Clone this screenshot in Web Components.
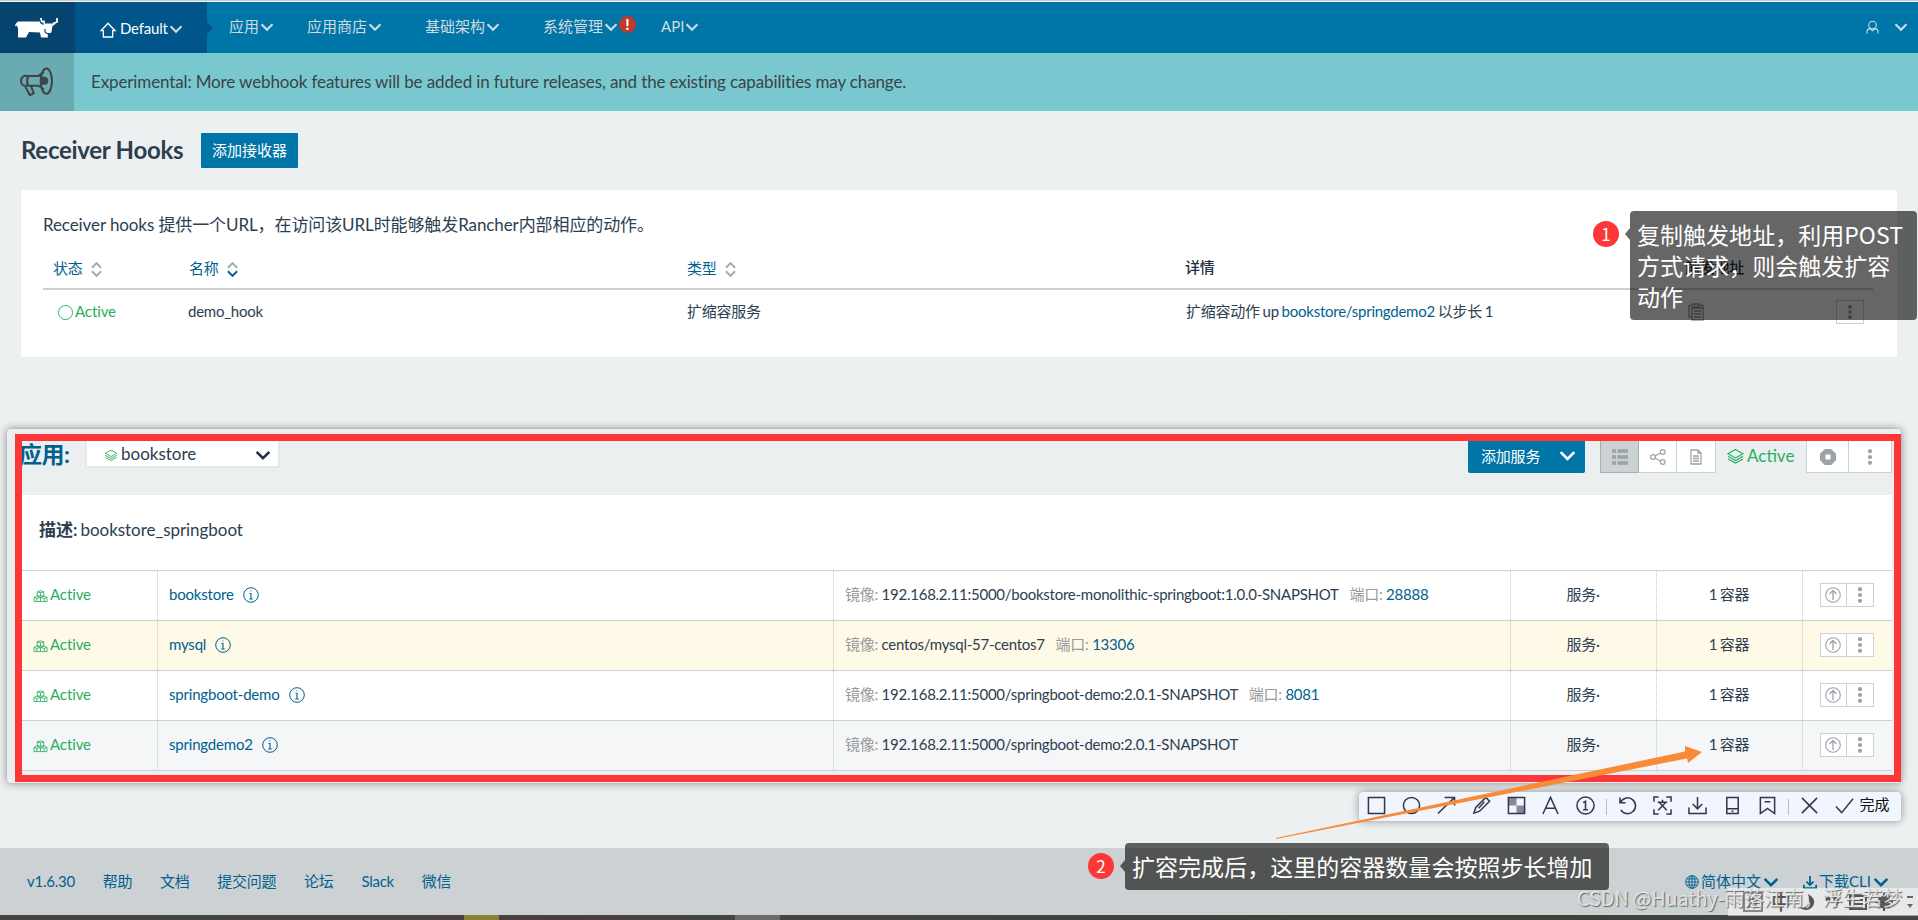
<!DOCTYPE html>
<html lang="zh">
<head>
<meta charset="utf-8">
<title>Receiver Hooks</title>
<style>
html, body { margin: 0; height: 920px; overflow: hidden; }
body {
  font: 15px/20px Lato, "Noto Sans CJK SC", sans-serif;
  letter-spacing: -.25px;
  color: #2c3e50;
  background: #ecf0f1;
}
</style>
</head>
<body>
<hook-page></hook-page>
<script>
(function () {
    // each icon: viewBox, then its shapes
    const icons = {
        cow: ['0 0 44 22', '<path fill="#fff" stroke="none" d="M4 4.500L27 4.500L28 6.500L42 6.500L40 8L38.500 9L37.500 15L36 16.500L33.500 16L34 20.500L27 20.500L26 15.500L15 15L12 20.500L4 20.500L4 11L2.500 8.500L1 9.500L1.500 7Z"/><path fill="none" stroke="#fff" stroke-width="1.800" d="M27 1V4.500H30V6.500M43 1V5L39 6.500"/><path fill="none" stroke="#054b7b" stroke-width="1.200" d="M25.500 2.500L27 6L29.500 7.500M31 12V15L33 16.500H36"/>'],
        home: ['0 0 24 24', '<path stroke-width="2" d="M1.500 13L12 2L22.500 13H19V22.500H5V13Z"/>'],
        down: ['1 1 22 22', '<path stroke-width="4" d="M2 7L12 17L22 7"/>'],
        horn: ['0 0 36 32', '<path stroke-width="2.200" d="M8 9.500C4 9 1.500 11 1.500 15S4 20.500 8 20H20L26 24M26 5L20 9.500H8"/><ellipse cx="28.500" cy="15" rx="6" ry="13.500" stroke-width="2.200"/><path stroke-width="2.200" d="M9 10Q7 15 9 20M6 21L11 30L15 28L12 20"/><path fill="currentColor" stroke="none" d="M23 10.500H27Q30.500 11 30.500 15T27 19H23Z"/>'],
        user: ['0 0 24 24', '<g stroke-width="2"><circle cx="12" cy="8.500" r="7"/><path d="M2 24V20Q2 16 7 15L12 19L17 15Q22 16 22 20V24"/></g>'],
        sort: ['0 0 12 16', '<path stroke-width="2.200" d="M1 6L6 1L11 6"/><path class="lo" stroke-width="2.200" d="M1 10L6 15L11 10"/>'],
        ring: ['0 0 16 16', '<circle cx="8" cy="8" r="7.500" stroke-width="1"/>'],
        clip: ['0 0 16 18', '<path stroke-width="1.300" d="M4 2.500H1V14H4M12 2.500H15V17H4V5H15M5 1H11V4H5ZM6 8H13M6 11H13M6 14H13"/>'],
        dots: ['0 0 16 16', '<g fill="currentColor" stroke="none"><circle cx="8" cy="2.200" r="2.100"/><circle cx="8" cy="8" r="2.100"/><circle cx="8" cy="13.800" r="2.100"/></g>'],
        layers: ['0 0 18 18', '<path stroke-width="1.200" d="M9 1.500L17 6L9 10.500L1 6ZM1 8.800L9 13.300L17 8.800M1 11.600L9 16L17 11.600"/>'],
        cubes: ['0 0 16 14', '<path stroke-width=".9" d="M4.500 2L8 .8L11.500 2V6.500H4.500ZM4.500 2L8 3L11.500 2M8 3V6.500M1 8L4 6.500L8 8L12 6.500L15 8V12.500H1ZM8 8V12.500M1 8L4 9L8 8L12 9L15 8M4 9V12.500M12 9V12.500"/>'],
        info: ['0 0 16 16', '<circle cx="8" cy="8" r="7.300" stroke-width="1"/><path stroke-width="1.100" d="M6.500 6.500H8V12M6.300 12H9.700M7.300 4H8.300"/>'],
        list: ['0 0 16 16', '<path stroke-width="3.300" d="M0 2H4M5.500 2H16M0 8H4M5.500 8H16M0 14H4M5.500 14H16"/>'],
        share: ['0 0 16 16', '<g stroke-width="1.200"><circle cx="3" cy="8" r="2.400"/><circle cx="12.700" cy="3" r="2.400"/><circle cx="12.700" cy="13" r="2.400"/><path d="M5 7L10.500 4M5 9L10.500 12"/></g>'],
        file: ['0 0 12 16', '<path stroke-width="1.300" d="M1 1H8L11 4V15H1ZM8 1V4H11M3 7H9M3 9.500H9M3 12H9"/>'],
        stop: ['0 0 16 16', '<path fill="currentColor" fill-rule="evenodd" stroke="none" d="M4.800 0H11.200L16 4.800V11.200L11.200 16H4.800L0 11.200V4.800ZM5.500 5.500V10.500H10.500V5.500Z"/>'],
        up: ['0 0 16 16', '<circle cx="8" cy="8" r="7.300" stroke-width="1.100"/><path stroke-width="1.300" d="M8 13V4M4.500 7L8 3.500L11.500 7"/>'],
        globe: ['0 0 16 16', '<g stroke-width="1.100"><circle cx="8" cy="8" r="7.200"/><ellipse cx="8" cy="8" rx="3.500" ry="7.200"/><path d="M8 1V15M1 8H15M2 4.500H14M2 11.500H14"/></g>'],
        download: ['0 0 16 16', '<path stroke-width="2" d="M8 1V11M4 7.500L8 11.500L12 7.500M1 11V15H15V11"/>'],
        // screenshot toolbar
        rect: ['0 0 20 20', '<path d="M1.500 1.500H18.500V18.500H1.500Z"/>'],
        oval: ['0 0 20 20', '<circle cx="10" cy="10" r="8.500"/>'],
        arrow: ['0 0 20 20', '<path d="M1 18.500L18 2M8 1.500H18.500V10"/>'],
        pen: ['0 0 20 20', '<path d="M2 18L4 12L14.500 1.500L18.500 5.500L8 16ZM13 6L7 13"/>'],
        mosaic: ['0 0 20 20', '<path fill="#858a9c" stroke="none" d="M1 1H10V10H19V19H10V10H1Z"/><path d="M1.500 1.500H18.500V18.500H1.500Z"/>'],
        letter: ['0 0 20 20', '<path d="M2 19L10 1.500L18 19M5 13H15"/>'],
        one: ['0 0 20 20', '<circle cx="10" cy="10" r="9"/><path d="M7.500 7L10 5.500V14.500M7.500 14.500H12.500"/>'],
        undo: ['0 0 20 20', '<path d="M2 1.500V7H8M2.500 7A8.300 8.300 0 1 1 3 14.500"/>'],
        ocr: ['0 0 20 20', '<path d="M1 6V1H6M14 1H19V6M19 14V19H14M6 19H1V14M5 6.500H15M10 4V6.500M7 7L14.500 15M13 7L5.500 15"/>'],
        save: ['0 0 20 20', '<path d="M10 1V13M5 8.500L10 13.500L15 8.500M1 12V18.500H19V12"/>'],
        phone: ['0 0 20 20', '<path d="M4 1.500H16V18.500H4ZM4 13.500H16M9 16H11"/>'],
        mark: ['0 0 20 20', '<path d="M2.500 1.500H17.500V18.500L10 13L2.500 18.500ZM7 6H13"/>'],
        close: ['0 0 20 20', '<path d="M2 2L18 18M18 2L2 18"/>'],
        check: ['0 0 20 20', '<path d="M1 11L7 17.500L19 3"/>']
    };

    function define(name, html, setup) {
        const tmpl = document.createElement('template');
        tmpl.innerHTML = html;
        customElements.define(name, class extends HTMLElement {
            constructor() {
                super();
                this.attachShadow({mode: 'open'}).appendChild(tmpl.content.cloneNode(true));
            }
            connectedCallback() {
                if (setup) setup(this, this.shadowRoot);
            }
        });
    }

    define('ui-icon', `<style>
:host { display: inline-block; flex: none; line-height: 0; }
svg { display: block; fill: none; stroke: currentColor; stroke-width: 1.6; overflow: visible; }
.lo { stroke: var(--sort-low, currentColor); }
</style><svg></svg>`, (el, root) => {
        const [box, body] = icons[el.getAttribute('name')];
        const svg = root.querySelector('svg');
        const [w, h] = (el.getAttribute('size') || '16').split('x');
        svg.setAttribute('viewBox', box);
        svg.setAttribute('width', w);
        svg.setAttribute('height', h || w);
        svg.innerHTML = body;
    });

    define('nav-item', `<style>
:host { display: flex; align-items: center; flex: none; color: #d3dadf; white-space: nowrap; letter-spacing: 0; }
ui-icon { margin: 3px 0 0 2px; color: #ccdbe3; }
</style><slot></slot><ui-icon name="down" size="12"></ui-icon><slot name="badge"></slot>`);

    define('top-bar', `<style>
:host { display: flex; height: 51px; background: #0075a8; border-top: 1px solid #f2f3f3; }
.logo { width: 75px; background: #04446f; display: flex; align-items: center; padding-left: 14px; box-sizing: border-box; }
.env { width: 132px; background: #00558b; color: #fff; display: flex; align-items: center; position: relative; padding-left: 25px; box-sizing: border-box; }
.env::after { content: ""; position: absolute; left: 132px; top: 20px; border: 6px solid transparent; border-left-color: #00558b; border-right: 0; }
.env ui-icon { margin-top: 4px; }
.env nav-item { color: #fff; margin-left: 4px; letter-spacing: -.2px; }
nav { display: flex; flex: 1; padding-left: 22px; height: 47px; }
.a { width: 78px; } .b { width: 118px; }
.badge { background: #c0392b; color: #fff; font-weight: 900; width: 17px; height: 17px; border-radius: 50%; line-height: 17px; text-align: center; margin-left: 2px; margin-top: -3px; }
.user { display: flex; align-items: center; color: #ccdbe3; gap: 16px; padding-right: 11px; height: 49px; }
</style>
<div class="logo"><ui-icon name="cow" size="44x22"></ui-icon></div>
<div class="env"><ui-icon name="home" size="16"></ui-icon><nav-item>Default</nav-item></div>
<nav>
<nav-item class="a">应用</nav-item>
<nav-item class="b">应用商店</nav-item>
<nav-item class="b">基础架构</nav-item>
<nav-item class="b">系统管理<span slot="badge" class="badge">!</span></nav-item>
<nav-item>API</nav-item>
</nav>
<div class="user"><ui-icon name="user" size="13x16"></ui-icon><ui-icon name="down" size="12"></ui-icon></div>`);

    define('notice-banner', `<style>
:host { display: flex; align-items: center; height: 58px; background: #7ac8cf; color: #3a4347; font-size: 17px; letter-spacing: -.13px; }
.icon { width: 74px; height: 58px; background: #69abb0; display: flex; align-items: center; justify-content: center; margin-right: 17px; color: #3d4548; }
.icon ui-icon { margin-right: 2px; }
</style><div class="icon"><ui-icon name="horn" size="35x30"></ui-icon></div><slot></slot>`);

    define('hook-table', `<style>
:host { display: block; height: 167px; margin: 0 21px; padding: 23px 24px 0 22px; box-sizing: border-box; background: #fff; box-shadow: 0 0 2px #dfe5e8; }
p { margin: 0; font-size: 17px; line-height: 24px; letter-spacing: -.1px; }
.row { display: grid; grid-template-columns: 134px 499px 499px 500px 1fr; align-items: center; padding-left: 11px; }
.head { height: 43px; margin-top: 8px; border-bottom: 2px solid #ccd1d5; color: #00618f; }
.head span { display: flex; align-items: center; gap: 8px; padding-top: 2px; }
.head span:first-child { margin-left: -1px; }
.head ui-icon { color: #a3abb0; margin-top: 3px; }
.by { --sort-low: #00618f; padding-left: 1px; }
.head .plain { color: #20303f; font-weight: 500; padding: 0; margin-left: -1px; }
.body { height: 42px; }
.ok { color: #27ae60; display: flex; align-items: center; padding-left: 4px; gap: 2px; letter-spacing: -.1px; }
.ok ui-icon { margin-top: 2px; }
a { color: #00618f; }
.deed { word-spacing: -.8px; }
.last { display: flex; align-items: center; justify-content: space-between; padding: 2px 9px 0 2px; color: #999; }
.menu { width: 26px; height: 22px; border: 1px solid #ccc; display: flex; align-items: center; justify-content: center; }
</style>
<p>Receiver hooks 提供一个URL，在访问该URL时能够触发Rancher内部相应的动作。</p>
<div class="row head">
<span>状态<ui-icon name="sort" size="11x15"></ui-icon></span>
<span class="by">名称<ui-icon name="sort" size="11x15"></ui-icon></span>
<span>类型<ui-icon name="sort" size="11x15"></ui-icon></span>
<span class="plain">详情</span>
<span class="plain">触发地址</span>
</div>
<div class="row body">
<div class="ok"><ui-icon name="ring" size="15"></ui-icon>Active</div>
<div>demo_hook</div>
<div>扩缩容服务</div>
<div class="deed">扩缩容动作 up <a>bookstore/springdemo2</a> 以步长 1</div>
<div class="last"><ui-icon name="clip" size="16x18"></ui-icon><span class="menu"><ui-icon name="dots" size="14"></ui-icon></span></div>
</div>`);

    define('service-row', `<style>
:host { display: grid; grid-template-columns: 135px 676px 676.500px 146px 146px 1fr; height: 49px; border-bottom: 1px solid #ccd1d3; background: #fff; }
div { display: flex; align-items: center; border-left: 1px dotted #c2c7c9; padding: 0 0 3px 11px; white-space: pre; }
.state { border: 0; color: #27ae60; gap: 2px; letter-spacing: -.1px; }
.state ui-icon { margin-top: 4px; }
.name { color: #00618f; gap: 9px; letter-spacing: -.2px; }
.name ui-icon { margin-top: 2px; }
.mid { justify-content: center; padding-left: 0; word-spacing: -1px; }
.act { padding: 0 0 1px 17px; color: #9ba3a9; }
.act span { width: 25.500px; height: 22px; border: 1px solid #ccd1d3; background: #fff; display: flex; align-items: center; justify-content: center; }
.act span + span { margin-left: -1px; }
</style>
<div class="state"><ui-icon name="cubes" size="15x13"></ui-icon>Active</div>
<div class="name"><slot name="name"></slot><ui-icon name="info" size="16"></ui-icon></div>
<div><slot></slot></div>
<div class="mid">服务·</div>
<div class="mid">1 容器</div>
<div class="act"><span><ui-icon name="up" size="16"></ui-icon></span><span><ui-icon name="dots" size="16"></ui-icon></span></div>`);

    // framed stack view, the red frame cuts the header a little
    define('stack-panel', `<style>
:host { display: block; box-sizing: border-box; width: 1894px; height: 354px; margin: 72px 0 0 7px; padding: 5px 0 1px 8px; border-radius: 4px; background: #ebefef; box-shadow: 0 0 9px rgba(0,0,0,.45); }
.frame { box-sizing: border-box; height: 348px; border: 7px solid #fd3737; overflow: hidden; padding-right: 2px; }
.head { height: 54px; display: flex; align-items: flex-start; }
h2 { margin: 0 0 0 -3px; width: 66px; font-size: 23px; line-height: 27px; color: #00618f; white-space: nowrap; letter-spacing: -.5px; }
.pick { width: 191px; height: 25px; background: #fff; border: 2px solid #e4e8e9; border-top: 0; font-size: 17px; display: flex; align-items: center; box-sizing: content-box; letter-spacing: 0; }
.pick ui-icon { margin: 3px 3px 0 17px; color: #27ae60; }
.pick ui-icon:last-child { margin: 3px 8px 0 auto; color: #20303f; }
.sp { flex: 1; }
.add { width: 117px; height: 32px; box-sizing: border-box; padding: 0 10px 3px 13px; background: #0075a8; color: #fff; display: flex; align-items: center; justify-content: space-between; border-radius: 0 0 2px 2px; margin-right: 15px; letter-spacing: -.2px; }
.group { display: flex; color: #9ba3a9; }
.group span { width: 38px; height: 32px; box-sizing: border-box; display: flex; align-items: center; justify-content: center; background: #fff; border-right: 1px solid #ccd1d3; border-bottom: 1px solid #ccd1d3; }
.group .on { background: #ccd1d3; border: 1px solid #a8afb3; border-top: 0; width: 39px; }
.views span:last-child { width: 39px; }
.group .wide { width: 43px; }
.group .wide:first-child { border-left: 1px solid #ccd1d3; }
.state { font-size: 17px; line-height: 30px; color: #27ae60; display: flex; align-items: center; gap: 3px; width: 79px; padding-left: 11px; letter-spacing: 0; }
.desc { height: 75px; background: #fff; border-bottom: 1px solid #ccd1d3; font-size: 17px; line-height: 70px; padding-left: 17px; letter-spacing: -.05px; word-spacing: -1px; }
.no { color: #999; } a { color: #00618f; }
.odd { background: #fff9e8; } .even { background: #f4f6f8; }
</style>
<div class="frame">
<div class="head">
<h2>应用:</h2>
<div class="pick"><ui-icon name="layers" size="14x13"></ui-icon>bookstore<ui-icon name="down" size="14"></ui-icon></div>
<div class="sp"></div>
<div class="add">添加服务<ui-icon name="down" size="15"></ui-icon></div>
<div class="group views"><span class="on"><ui-icon name="list"></ui-icon></span><span><ui-icon name="share"></ui-icon></span><span><ui-icon name="file" size="12x16"></ui-icon></span></div>
<div class="state"><ui-icon name="layers" size="17"></ui-icon>Active</div>
<div class="group"><span class="wide"><ui-icon name="stop"></ui-icon></span><span class="wide"><ui-icon name="dots" size="16"></ui-icon></span></div>
</div>
<div class="desc"><b>描述:</b> bookstore_springboot</div>
<service-row><span slot="name">bookstore</span><span class="no">镜像: </span>192.168.2.11:5000/bookstore-monolithic-springboot:1.0.0-SNAPSHOT<span class="no">   端口: </span><a>28888</a></service-row>
<service-row class="odd"><span slot="name">mysql</span><span class="no">镜像: </span>centos/mysql-57-centos7<span class="no">   端口: </span><a>13306</a></service-row>
<service-row><span slot="name">springboot-demo</span><span class="no">镜像: </span>192.168.2.11:5000/springboot-demo:2.0.1-SNAPSHOT<span class="no">   端口: </span><a>8081</a></service-row>
<service-row class="even"><span slot="name">springdemo2</span><span class="no">镜像: </span>192.168.2.11:5000/springboot-demo:2.0.1-SNAPSHOT</service-row>
</div>`);

    define('page-footer', `<style>
:host { display: flex; align-items: center; box-sizing: border-box; height: 67px; margin-top: 65px; padding: 0 28px 2px 27px; background: #ccd1d3; color: #00618f; gap: 27.800px; }
.right { display: flex; align-items: center; margin-left: auto; letter-spacing: 0; }
ui-icon { margin: 3px 2px 0 3px; }
.cli { margin-left: 20px; display: flex; align-items: center; }
</style>
<span>v1.6.30</span><span>帮助</span><span>文档</span><span>提交问题</span><span>论坛</span><span>Slack</span><span>微信</span>
<div class="right"><ui-icon name="globe" size="14"></ui-icon>简体中文<ui-icon name="down" size="14"></ui-icon>
<span class="cli"><ui-icon name="download" size="14"></ui-icon>下载CLI<ui-icon name="down" size="14"></ui-icon></span></div>`);

    define('task-strip', `<style>
:host { display: flex; height: 5px; background: linear-gradient(90deg, #444, #4b3e40 30%, #444 40%, #3b423b 75%, #444); }
i { height: 5px; width: 35px; margin-left: 464px; background: #8f8038; }
i + i { width: 45px; margin-left: 236px; background: #6b6b6b; }
</style><i></i><i></i>`);

    define('note-tip', `<style>
:host { position: absolute; display: flex; align-items: flex-start; color: #fff; font: 23px/31px "Noto Sans CJK SC", sans-serif; letter-spacing: .03px; }
b { flex: none; width: 26px; height: 26px; margin-top: 10px; border-radius: 50%; background: #fd3737; font: 17px/25px "Noto Sans CJK SC", sans-serif; text-align: center; }
i { flex: none; margin: 17px 0 0 6px; border: 6px solid transparent; border-right: 5px solid rgba(0,0,0,.6); border-left: 0; }
div { flex: 1; box-sizing: border-box; height: 100%; background: rgba(0,0,0,.6); border-radius: 4px; padding: 8px 0 0 7px; white-space: pre; }
</style><b></b><i></i><div><slot></slot></div>`, (el, root) => {
        root.querySelector('b').textContent = el.getAttribute('num');
    });

    define('snip-toolbar', `<style>
:host { position: absolute; display: flex; align-items: center; box-sizing: border-box; width: 542px; height: 29px; border-radius: 4px; background: #f1f5fe; color: #34364a; box-shadow: 0 0 8px rgba(0,0,0,.4); letter-spacing: 0; }
ui-icon { width: 34.900px; display: flex; justify-content: center; margin-top: -2px; }
i { width: 1px; height: 16px; background: #b9bdc6; margin: 0 3px; }
span { color: #111; margin: -5px 0 0 -2px; white-space: nowrap; }
</style>`, (el, root) => {
        let html = '';
        for (const n of 'rect oval arrow pen mosaic letter one | undo ocr save phone mark | close check'.split(' ')) {
            html += n === '|' ? '<i></i>' : `<ui-icon name="${n}" size="19"></ui-icon>`;
        }
        const box = document.createElement('template');
        box.innerHTML = html + '<span>完成</span>';
        root.appendChild(box.content);
    });

    define('ime-bar', `<style>
:host { position: absolute; display: flex; align-items: center; box-sizing: border-box; width: 190px; height: 28px; padding-left: 15px; gap: 8px; background: rgba(255,255,255,.52); color: #555; font: 500 20px/28px "Noto Sans CJK SC", sans-serif; letter-spacing: 0; }
.box { border: 2px solid #888; width: 16px; height: 16px; font-size: 11px; line-height: 16px; text-align: center; }
svg { flex: none; }
.end { margin-left: auto; padding-right: 4px; }
</style><span class="box">拼</span><span>中</span>
<svg width="17" height="20" viewBox="0 0 17 20"><path fill="#555" d="M9 2Q18 7 14 14Q9 21 1 16Q10 16 10 8Q10 5 9 2Z"/></svg>
<svg width="17" height="20" viewBox="0 0 17 20"><g fill="#555"><circle cx="4" cy="7" r="2.500"/><path d="M10 5Q16 5 15 10Q14 15 9 17Q12 13 11 10Q8 8 10 5Z"/></g></svg>
<svg width="18" height="18" viewBox="0 0 18 18" fill="none" stroke="#555" stroke-width="2"><path d="M1 3H17V16H1ZM4 7H14M4 11H14"/></svg>
<svg width="18" height="18" viewBox="0 0 18 18" fill="none" stroke="#555" stroke-width="3"><circle cx="9" cy="9" r="5"/><path stroke-width="2" d="M9 0V18M0 9H18M3 3L15 15M15 3L3 15"/></svg>
<svg class="end" width="8" height="14" viewBox="0 0 8 14"><path fill="#666" d="M1 1H7V3H1ZM1 9H7L4 13Z"/></svg>`);

    define('hook-page', `<style>
:host { display: block; position: relative; width: 1918px; height: 920px; overflow: hidden; border-top: 1px solid #c9cbcc; box-sizing: border-box; }
.title { display: flex; align-items: center; height: 79px; padding-left: 21px; }
h1 { margin: -1px 14px 0 0; font-size: 24px; font-weight: 700; width: 166px; white-space: nowrap; letter-spacing: -.28px; }
button { font: inherit; letter-spacing: 0; color: #fff; background: #0075a8; border: 0; width: 97px; height: 35px; border-radius: 1px; padding: 0 0 2px; }
note-tip.one { left: 1593px; top: 210px; width: 324px; height: 109px; }
note-tip.two { left: 1088px; top: 842px; width: 521px; height: 47px; }
snip-toolbar { left: 1359px; top: 791px; }
ime-bar { left: 1728px; top: 887px; }
.arrow { position: absolute; left: 1276px; top: 743px; }
.mark { position: absolute; left: 1577px; top: 882px; font: 20px/30px "Noto Sans CJK SC", sans-serif; letter-spacing: -.25px; color: rgba(235,238,238,.85); text-shadow: 1px 1px 1px #666; white-space: nowrap; }
</style>
<top-bar></top-bar>
<notice-banner>Experimental: More webhook features will be added in future releases, and the existing capabilities may change.</notice-banner>
<div class="title"><h1>Receiver Hooks</h1><button>添加接收器</button></div>
<hook-table></hook-table>
<stack-panel></stack-panel>
<page-footer></page-footer>
<task-strip></task-strip>
<note-tip class="one" num="1">复制触发地址，利用POST<br>方式请求，则会触发扩容<br>动作</note-tip>
<snip-toolbar></snip-toolbar>
<svg class="arrow" width="430" height="96"><path fill="#f98a38" d="M0 94L409 7.500V2L426 8L412 19L411 14.500L0 95Z"/></svg>
<note-tip class="two" num="2">扩容完成后，这里的容器数量会按照步长增加</note-tip>
<ime-bar></ime-bar>
<div class="mark">CSDN @Huathy-雨落江南，浮生若梦</div>`);
})();
</script>
</body>
</html>
